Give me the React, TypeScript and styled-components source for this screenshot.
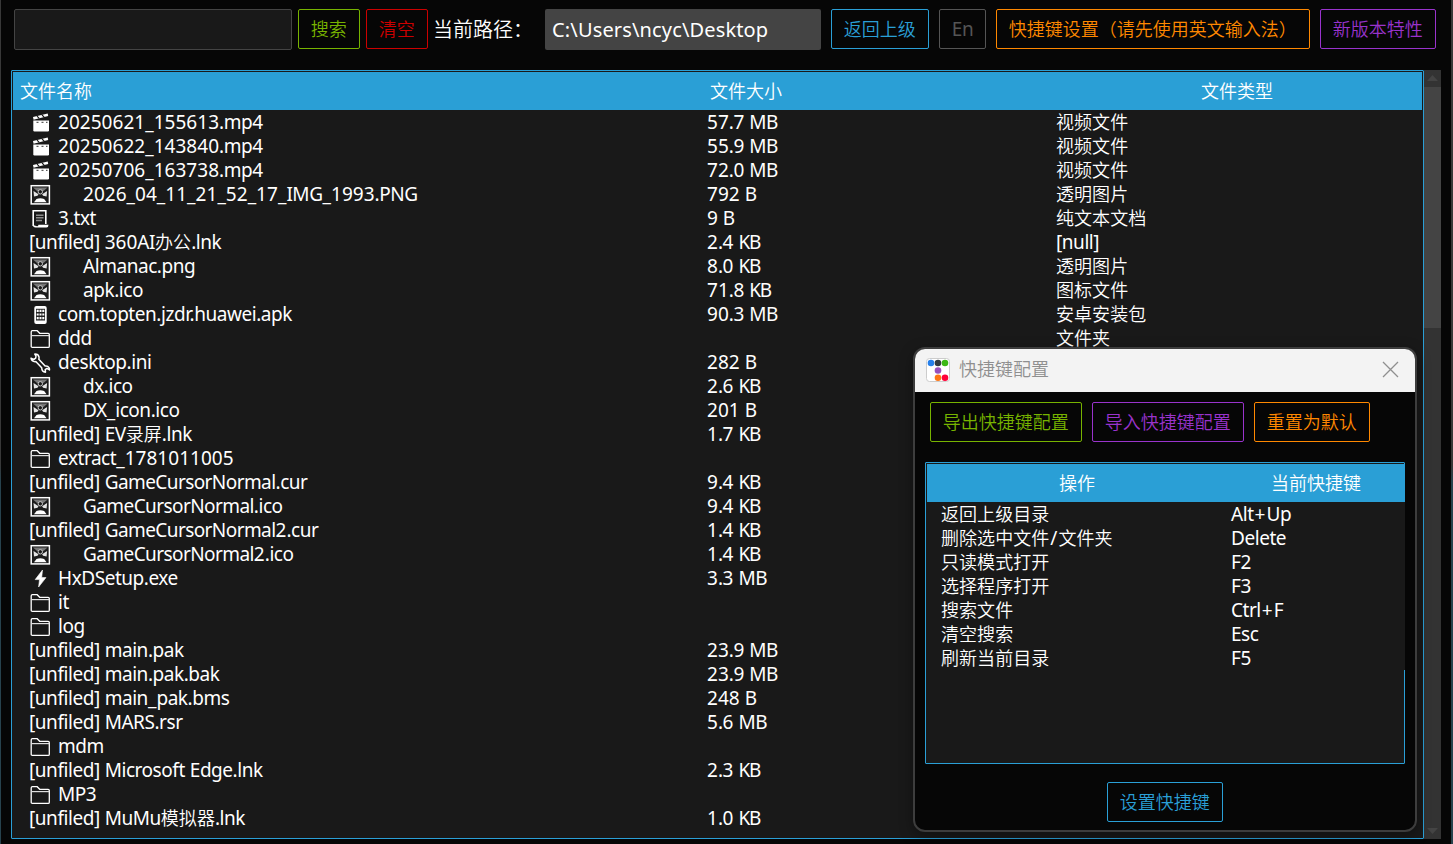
import React from 'react';
import styled, { createGlobalStyle } from 'styled-components';

const BLUE = '#2a9fd6';
const GREEN = '#77b300';
const RED = '#cc0000';
const ORANGE = '#ff8800';
const PURPLE = '#9933cc';
const GRAY = '#555555';
const PANEL = '#191919';

const GlobalStyle = createGlobalStyle`
  * { box-sizing: border-box; }
  body {
    margin: 0;
    background: #060606;
    color: #fff;
    font-family: 'Noto Sans', 'Noto Sans CJK SC', sans-serif;
    overflow: hidden;
  }
`;

const Frame = styled.div`
  width: 1453px;
  height: 844px;
  padding: 9px 10px 0 10px;
  border-left: 1px solid #333;
  border-right: 2px solid #3a3a3a;
  border-image: linear-gradient(#383838 0 55%, #27424d 57% 100%) 1;
  border-top: 0;
  border-bottom: 0;
`;

const Toolbar = styled.div`
  display: flex;
  align-items: flex-start;
  height: 61px;
  padding-left: 3px;
`;

const SearchInput = styled.input`
  width: 278px;
  height: 41px;
  margin-right: 6px;
  padding: 0 8px;
  background: ${PANEL};
  border: 1px solid #444;
  border-radius: 2px;
  color: #fff;
  outline: none;
`;

const Button = styled.button<{ $color: string; $width: number; $gap?: number }>`
  flex: none;
  display: flex;
  align-items: center;
  justify-content: center;
  width: ${(p) => p.$width}px;
  height: 40px;
  margin: 0 ${(p) => p.$gap ?? 10}px 0 0;
  padding: 0 0.5px 1px 0;
  background: transparent;
  border: 1px solid ${(p) => p.$color};
  border-radius: 2px;
  color: ${(p) => p.$color};
  font: 350 18px/24px 'Noto Sans', 'Noto Sans CJK SC', sans-serif;
  white-space: nowrap;
`;

const LanguageButton = styled(Button)`
  padding-right: 0;
  font-size: 19px;
  font-weight: 400;
  letter-spacing: -0.3px;
`;

const PathLabel = styled.span`
  width: 112px;
  margin: 0 0 0 -1px;
  padding-top: 6px;
  font-size: 20px;
  font-weight: 350;
  line-height: 30px;
  white-space: nowrap;
`;

const PathBox = styled.div`
  width: 276px;
  height: 41px;
  margin-right: 10px;
  padding: 0 7px;
  background: #444;
  border-radius: 2px;
  font-size: 20px;
  letter-spacing: 0.15px;
  line-height: 41px;
  white-space: nowrap;
`;

const Body = styled.div`
  display: flex;
  height: 769px;
`;

const FilePanel = styled.div`
  width: 1413px;
  padding: 1px;
  background: ${PANEL};
  border: 1px solid ${BLUE};
  border-radius: 1px;
`;

const HeaderRow = styled.div<{ $columns: string }>`
  display: grid;
  grid-template-columns: ${(p) => p.$columns};
  align-items: center;
  height: 38px;
  background: ${BLUE};
  font-size: 18px;
  font-weight: 350;
  line-height: 24px;
  white-space: nowrap;
`;

const HeaderCell = styled.span<{ $center?: boolean }>`
  padding-left: ${(p) => (p.$center ? 0 : 7)}px;
  text-align: ${(p) => (p.$center ? 'center' : 'left')};
`;

const FileRow = styled.div`
  display: grid;
  grid-template-columns: 678px 349px 1fr;
  height: 24px;
  padding-left: 16px;
  font-size: 19px;
  line-height: 24px;
  white-space: pre;
`;

const Cell = styled.span`
  display: flex;
  align-items: center;
  height: 24px;
`;

const IconSlot = styled.span<{ $wide?: boolean }>`
  display: flex;
  width: ${(p) => (p.$wide ? 54 : 29)}px;
`;

const Han = styled.span`
  font-family: 'Noto Sans CJK SC', sans-serif;
  font-size: 18px;
  font-weight: 350;
  line-height: 1;
  letter-spacing: 0.05px;
`;

const Tracked = styled.span<{ $tracking: number }>`
  letter-spacing: ${(p) => p.$tracking}px;
`;

const Sign = styled.span`
  margin: 0 1px;
`;

const ScrollTrack = styled.div`
  display: flex;
  flex-direction: column;
  width: 17px;
  height: 769px;
  background: #333;
`;

const ScrollThumb = styled.div`
  height: 241px;
  margin-bottom: auto;
  background: #444;
`;

const Dialog = styled.div`
  position: absolute;
  left: 913px;
  top: 347px;
  width: 504px;
  height: 485px;
  display: flex;
  flex-direction: column;
  overflow: hidden;
  background: #060606;
  border: 2px solid #3d3d3d;
  border-radius: 12px;
  box-shadow: 0 4px 14px rgba(0, 0, 0, 0.35);
`;

const TitleBar = styled.div`
  display: flex;
  align-items: center;
  height: 43px;
  padding: 0 16px 2px 11px;
  background: #f3f3f3;
  color: #8f8f8f;
  font-size: 18px;
  font-weight: 350;
`;

const TitleText = styled.span`
  flex: 1;
  padding: 0 0 2px 9px;
  line-height: 24px;
`;

const DialogActions = styled.div`
  display: flex;
  padding: 10px 15px 20px;
`;

const KeyPanel = styled.div`
  width: 480px;
  height: 302px;
  margin-left: 10px;
  padding: 1px 0 0 1px;
  background: ${PANEL};
  border: 1px solid ${BLUE};
  border-radius: 1px;
`;

const KeyContent = styled.div`
  width: 478px;
  background: ${PANEL};
`;

const KeyRow = styled.div`
  display: grid;
  grid-template-columns: 290px 1fr;
  height: 24px;
  padding-left: 14px;
  font-size: 19px;
  line-height: 24px;
`;

const DialogFooter = styled.div`
  display: flex;
  justify-content: center;
  padding: 18px 0 0 0;
`;

const Svg = ({ children }: { children: React.ReactNode }) => (
  <svg width="22" height="22" viewBox="0 0 22 22" fill="none">
    {children}
  </svg>
);

const icons: Record<string, React.ReactNode> = {
  video: (
    <Svg>
      <path d="M4.300 9.600h15.700v9.700q0 1.200-1.200 1.200H5.500q-1.200 0-1.200-1.200z" fill="#fff" />
      <path d="M4 6l14.700-3.600.5 2.600L4.600 8.700z" fill="#fff" />
      <path d="M8 5.200l2.200 2.200M13 4l2.200 2.200" stroke="#191919" strokeWidth="1.100" />
      <path d="M7.500 11.300h2M12.500 11.300h2M17 11.300h1.500" stroke="#333" strokeWidth="1" />
    </Svg>
  ),
  image: (
    <Svg>
      <rect x="2.200" y="2.700" width="18.200" height="18.200" fill="#1c1c1c" stroke="#fff" strokeWidth="1.500" />
      <path d="M4 4.500h14.600L14.500 8H8z" fill="#777" />
      <path d="M4.500 8l5 3.200-1 1.600-3.500.7zM18.100 8l-5 3.200 1 1.600 3.500.7z" fill="#e4e4e4" />
      <circle cx="11.300" cy="8.800" r="2.200" fill="#191919" stroke="#ccc" />
      <path d="M5 19.200l2.500-3.200q3.800-1.600 7.600 0l2.500 3.200z" fill="#fff" />
    </Svg>
  ),
  text: (
    <Svg>
      <path d="M4.200 19V3.800h12.600V17" stroke="#fff" strokeWidth="1.600" />
      <path d="M4 18q0 2.500 2.500 2.500h11q2 0 2-2.700H9.500q-.2 1.500-1.500 1.500z" fill="#fff" />
      <path d="M7 8.200h7.500M7 10.800h7.500M7 13.400h6" stroke="#8a8a8a" strokeWidth="1.500" />
    </Svg>
  ),
  apk: (
    <Svg>
      <rect x="5.300" y="3" width="12.400" height="18" rx="2" fill="#fff" />
      <rect x="7" y="5.800" width="9" height="11.700" fill="#222" />
      <path d="M7.700 7.800h2M10.500 7.800h2M13.300 7.800h2M7.700 11.500h2M10.500 11.500h2M13.300 11.500h2M7.700 15.200h2M10.500 15.200h2M13.300 15.200h2" stroke="#fff" strokeWidth="2.200" />
    </Svg>
  ),
  folder: (
    <Svg>
      <path
        d="M2.200 19.200V4.900q0-1.200 1.200-1.200h4.800l2.500 2.600h8.400q1.200 0 1.200 1.200v11.700q0 1.200-1.200 1.200H3.400q-1.200 0-1.200-1.200z"
        stroke="#fff"
        strokeWidth="1.300"
      />
      <path d="M2.200 8.600h18" stroke="#ddd" strokeWidth="1.200" />
    </Svg>
  ),
  wrench: (
    <Svg>
      <path
        d="M5.800 3.100Q9.300 3 10 6q.2 1.200-.2 2.300l6.300 6.800q2.600-.4 3.900 1.500.7 1.200.5 2.300l-2.500-1.500-1.800 1.200.3 2.600q-3.700-.3-3.800-4.400L6.800 10.600Q2.600 11 2 7.200l2.700 1.300 2-1.300.3-2.200z"
        stroke="#fff"
        strokeWidth="1.500"
        strokeLinejoin="round"
      />
    </Svg>
  ),
  exe: (
    <Svg>
      <path d="M13.500 3L6.200 12.600h4.300L9.600 20 17 10.600h-4.300z" fill="#fff" stroke="#fff" strokeWidth=".6" />
    </Svg>
  ),
};

type FileItem = [icon: string, name: string, size: string, type: string];

const files: FileItem[] = [
  ['video', '20250621_155613.mp4', '57.7 MB', '视频文件'],
  ['video', '20250622_143840.mp4', '55.9 MB', '视频文件'],
  ['video', '20250706_163738.mp4', '72.0 MB', '视频文件'],
  ['image', '2026_04_11_21_52_17_IMG_1993.PNG', '792 B', '透明图片'],
  ['text', '3.txt', '9 B', '纯文本文档'],
  ['', '[unfiled] 360AI办公.lnk', '2.4 KB', '[null]'],
  ['image', 'Almanac.png', '8.0 KB', '透明图片'],
  ['image', 'apk.ico', '71.8 KB', '图标文件'],
  ['apk', 'com.topten.jzdr.huawei.apk', '90.3 MB', '安卓安装包'],
  ['folder', 'ddd', '', '文件夹'],
  ['wrench', 'desktop.ini', '282 B', ''],
  ['image', 'dx.ico', '2.6 KB', ''],
  ['image', 'DX_icon.ico', '201 B', ''],
  ['', '[unfiled] EV录屏.lnk', '1.7 KB', ''],
  ['folder', 'extract_1781011005', '', ''],
  ['', '[unfiled] GameCursorNormal.cur', '9.4 KB', ''],
  ['image', 'GameCursorNormal.ico', '9.4 KB', ''],
  ['', '[unfiled] GameCursorNormal2.cur', '1.4 KB', ''],
  ['image', 'GameCursorNormal2.ico', '1.4 KB', ''],
  ['exe', 'HxDSetup.exe', '3.3 MB', ''],
  ['folder', 'it', '', ''],
  ['folder', 'log', '', ''],
  ['', '[unfiled] main.pak', '23.9 MB', ''],
  ['', '[unfiled] main.pak.bak', '23.9 MB', ''],
  ['', '[unfiled] main_pak.bms', '248 B', ''],
  ['', '[unfiled] MARS.rsr', '5.6 MB', ''],
  ['folder', 'mdm', '', ''],
  ['', '[unfiled] Microsoft Edge.lnk', '2.3 KB', ''],
  ['folder', 'MP3', '', ''],
  ['', '[unfiled] MuMu模拟器.lnk', '1.0 KB', ''],
];

const shortcuts: [string, string][] = [
  ['返回上级目录', 'Alt+Up'],
  ['删除选中文件/文件夹', 'Delete'],
  ['只读模式打开', 'F2'],
  ['选择程序打开', 'F3'],
  ['搜索文件', 'Ctrl+F'],
  ['清空搜索', 'Esc'],
  ['刷新当前目录', 'F5'],
];

const trackingOf = (part: string) => {
  if (part === 'GameCursorNormal') return -0.58;
  if (part === 'KB') return -1.2;
  if (part === ' ') return 0;
  if (part === '[unfiled]') return -0.45;
  if (/^[\d_]+$/.test(part)) return 0.03;
  return -0.45;
};

const renderPart = (part: string, key: number) => {
  if (/[\u4e00-\u9fff]/.test(part)) return <Han key={key}>{part}</Han>;
  if (part === '+' || part === '/') return <Sign key={key}>{part}</Sign>;
  return <Tracked key={key} $tracking={trackingOf(part)}>{part}</Tracked>;
};

/* Sets Han runs in their own face and size, and tightens the Latin words but not the figures. */
const Mixed = ({ text }: { text: string }) => (
  <span>
    {text
      .split(/([\u4e00-\u9fff]+|[\d_]+|\+|\/| |KB|GameCursorNormal)/)
      .filter(Boolean)
      .map(renderPart)}
  </span>
);

const Arrow = ({ down }: { down?: boolean }) => (
  <svg width="17" height="17" viewBox="0 0 17 17">
    <path d={down ? 'M3 6h11l-5.500 6z' : 'M3 11h11L8.500 5z'} fill="#444" />
  </svg>
);

const AppLogo = () => (
  <svg width="24" height="24" viewBox="0 0 24 24">
    <rect x=".5" y=".5" width="23" height="23" rx="3" fill="#fff" stroke="#ccc" />
    <circle cx="5" cy="5" r="3.300" fill="#2680eb" />
    <circle cx="12" cy="5" r="3.300" fill="#333b41" />
    <circle cx="19" cy="5" r="3.300" fill="#3cb915" />
    <circle cx="12" cy="12.500" r="3.300" fill="#9850bd" />
    <circle cx="12" cy="19.800" r="3.300" fill="#ff7614" />
    <circle cx="19" cy="19.800" r="3.300" fill="#ff0038" />
  </svg>
);

export default function App() {
  return (
    <>
      <GlobalStyle />
      <Frame>
        <Toolbar>
          <SearchInput />
          <Button $color={GREEN} $width={62} $gap={6}>搜索</Button>
          <Button $color={RED} $width={62} $gap={6}>清空</Button>
          <PathLabel>当前路径：</PathLabel>
          <PathBox>C:\Users\ncyc\Desktop</PathBox>
          <Button $color={BLUE} $width={98}>返回上级</Button>
          <LanguageButton $color={GRAY} $width={47}>En</LanguageButton>
          <Button $color={ORANGE} $width={314}>快捷键设置（请先使用英文输入法）</Button>
          <Button $color={PURPLE} $width={116} $gap={0}>新版本特性</Button>
        </Toolbar>
        <Body>
          <FilePanel>
            <HeaderRow $columns="690px 349px 1fr">
              <HeaderCell>文件名称</HeaderCell>
              <HeaderCell>文件大小</HeaderCell>
              <HeaderCell $center>文件类型</HeaderCell>
            </HeaderRow>
            {files.map(([icon, name, size, type]) => (
              <FileRow key={name}>
                <Cell>
                  {icon && <IconSlot $wide={icon === 'image'}>{icons[icon]}</IconSlot>}
                  <Mixed text={name} />
                </Cell>
                <Cell><Mixed text={size} /></Cell>
                <Cell><Mixed text={type} /></Cell>
              </FileRow>
            ))}
          </FilePanel>
          <ScrollTrack>
            <Arrow />
            <ScrollThumb />
            <Arrow down />
          </ScrollTrack>
        </Body>
      </Frame>
      <Dialog>
        <TitleBar>
          <AppLogo />
          <TitleText>快捷键配置</TitleText>
          <svg width="17" height="17" viewBox="0 0 17 17">
            <path d="M1 1l15 15M16 1L1 16" stroke="#8f8f8f" strokeWidth="1.300" />
          </svg>
        </TitleBar>
        <DialogActions>
          <Button $color={GREEN} $width={152}>导出快捷键配置</Button>
          <Button $color={PURPLE} $width={152}>导入快捷键配置</Button>
          <Button $color={ORANGE} $width={116}>重置为默认</Button>
        </DialogActions>
        <KeyPanel>
          <KeyContent>
            <HeaderRow $columns="300px 1fr">
              <HeaderCell $center>操作</HeaderCell>
              <HeaderCell $center>当前快捷键</HeaderCell>
            </HeaderRow>
            {shortcuts.map(([action, key]) => (
              <KeyRow key={action}>
                <Cell><Mixed text={action} /></Cell>
                <Cell><Mixed text={key} /></Cell>
              </KeyRow>
            ))}
          </KeyContent>
        </KeyPanel>
        <DialogFooter>
          <Button $color={BLUE} $width={116} $gap={0}>设置快捷键</Button>
        </DialogFooter>
      </Dialog>
    </>
  );
}
